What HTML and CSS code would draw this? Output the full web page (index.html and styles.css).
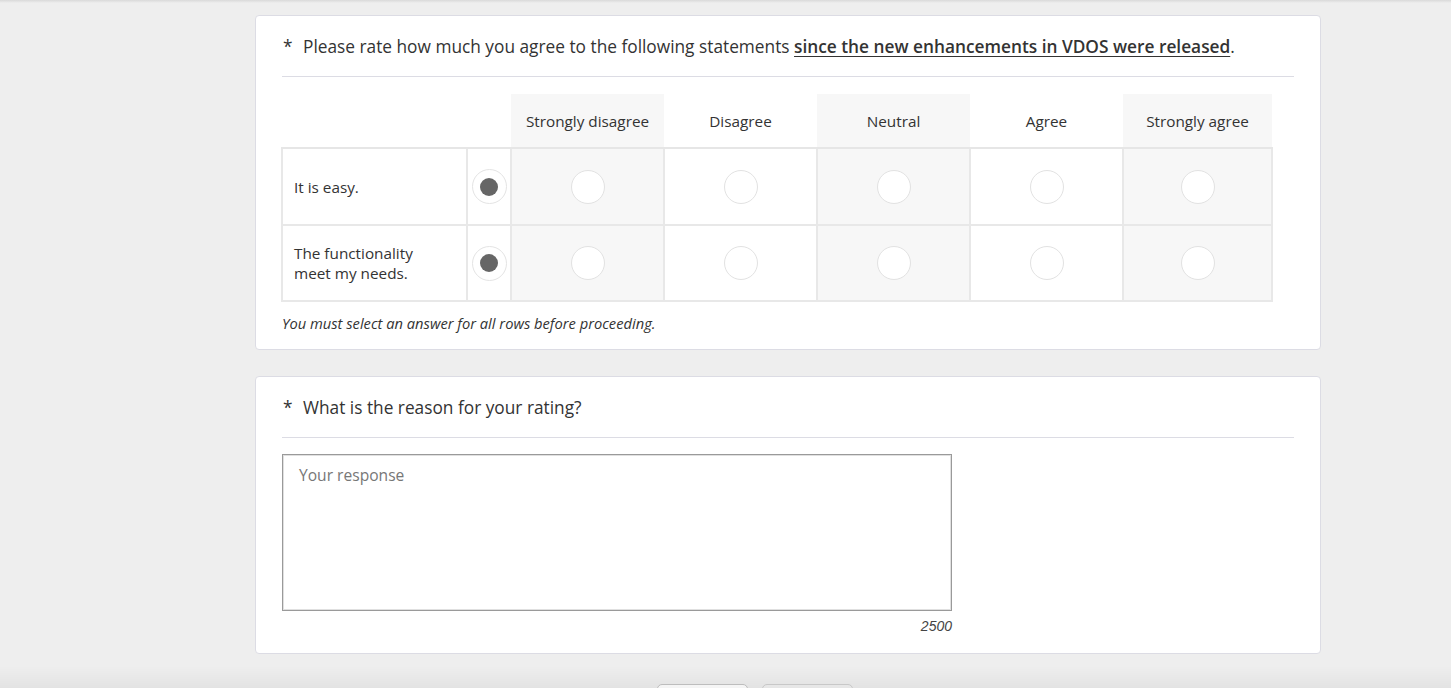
FILE: index.html
```html
<!DOCTYPE html>
<html lang="en">
<head>
<meta charset="utf-8">
<title>Survey</title>
<link rel="stylesheet" href="styles.css">
</head>
<body>
<div class="page">
  <section class="card">
    <h2 class="q-title"><span class="req">*</span><span>Please rate how much you agree to the following statements <u class="em">since the new enhancements in VDOS were released</u>.</span></h2>
    <div class="divider"></div>
    <table class="matrix">
      <colgroup>
        <col class="c-label"><col class="c-sel"><col class="c-opt"><col class="c-opt"><col class="c-opt"><col class="c-opt"><col class="c-opt5">
      </colgroup>
      <thead>
        <tr>
          <th class="blank"></th>
          <th class="blank"></th>
          <th class="shade">Strongly disagree</th>
          <th>Disagree</th>
          <th class="shade">Neutral</th>
          <th>Agree</th>
          <th class="shade">Strongly agree</th>
        </tr>
      </thead>
      <tbody>
        <tr class="r1">
          <td class="label">It is easy.</td>
          <td class="sel"><span class="radio checked"></span></td>
          <td class="shade"><span class="radio"></span></td>
          <td><span class="radio"></span></td>
          <td class="shade"><span class="radio"></span></td>
          <td><span class="radio"></span></td>
          <td class="shade"><span class="radio"></span></td>
        </tr>
        <tr class="r2">
          <td class="label">The functionality<br>meet my needs.</td>
          <td class="sel"><span class="radio checked"></span></td>
          <td class="shade"><span class="radio"></span></td>
          <td><span class="radio"></span></td>
          <td class="shade"><span class="radio"></span></td>
          <td><span class="radio"></span></td>
          <td class="shade"><span class="radio"></span></td>
        </tr>
      </tbody>
    </table>
    <p class="note">You must select an answer for all rows before proceeding.</p>
  </section>

  <section class="card card2">
    <h2 class="q-title"><span class="req">*</span><span>What is the reason for your rating?</span></h2>
    <div class="divider"></div>
    <div class="resp">
      <div class="textarea">Your response</div>
      <div class="count">2500</div>
    </div>
  </section>

  <div class="buttons">
    <span class="btn btn-light"></span>
    <span class="btn btn-gray"></span>
  </div>
</div>
</body>
</html>
```

FILE: styles.css
```css
html, body {
  margin: 0;
  padding: 0;
}
body {
  background: #eeeeee;
  font-family: "Open Sans", "Noto Sans", sans-serif;
  color: #333333;
  height: 688px;
  overflow: hidden;
  position: relative;
}
body::before {
  content: "";
  position: fixed;
  left: 0;
  right: 0;
  top: 0;
  height: 3px;
  background: linear-gradient(#d9d9d9, #eeeeee);
}
body::after {
  content: "";
  position: fixed;
  left: 0;
  right: 0;
  bottom: 0;
  height: 22px;
  background: linear-gradient(rgba(0,0,0,0), rgba(0,0,0,0.045));
  pointer-events: none;
}
.page {
  width: 1066px;
  margin-left: 255px;
  padding-top: 15px;
  display: flex;
  flex-direction: column;
}
.card {
  background: #ffffff;
  border: 1px solid #dcdce4;
  border-radius: 4px;
  padding: 19px 26px 0 26px;
  box-sizing: border-box;
}
.card:first-child {
  height: 335px;
}
.card2 {
  margin-top: 26px;
  height: 278px;
}
.q-title {
  margin: 0;
  font-size: 17.3px;
  font-weight: 400;
  line-height: 24px;
  display: flex;
  gap: 10px;
  color: #333;
}
.req {
  display: inline-block;
  width: 10px;
  padding-left: 1px;
}
.em {
  font-weight: 600;
  text-decoration-thickness: 1px;
  text-underline-offset: 3px;
}
.divider {
  height: 1px;
  background: #dcdce4;
  margin-top: 17px;
}
.matrix {
  margin-top: 17px;
  margin-left: -1px;
  border-collapse: collapse;
  table-layout: fixed;
  width: 990px;
  font-size: 15.3px;
}
.c-label { width: 185px; }
.c-sel { width: 44px; }
.c-opt { width: 153px; }
.c-opt5 { width: 149px; }
.matrix th {
  height: 53px;
  padding: 0;
  font-weight: 400;
  text-align: center;
  color: #333;
  border: none;
  border-bottom: 2px solid #e6e6e6;
}
.matrix .shade {
  background: #f7f7f7;
}
.matrix td {
  border: 2px solid #e8e8e8;
  padding: 0;
  text-align: center;
  vertical-align: middle;
}
.matrix tr.r1 td { height: 75px; }
.matrix tr.r2 td { height: 74px; }
.matrix td.label {
  text-align: left;
  padding-left: 11px;
  line-height: 20px;
  color: #333;
}
.matrix td.sel {
  padding: 0;
}
.radio {
  display: inline-block;
  width: 34px;
  height: 34px;
  border: 1.5px solid #e2e2e2;
  border-radius: 50%;
  background: #ffffff;
  vertical-align: middle;
  box-sizing: border-box;
  position: relative;
}
.radio.checked {
  width: 35px;
  height: 35px;
  border: 1.5px solid #e4e4e4;
}
.radio.checked::after {
  content: "";
  position: absolute;
  left: 50%;
  top: 50%;
  width: 18px;
  height: 18px;
  margin: -9px 0 0 -9px;
  border-radius: 50%;
  background: #666666;
}
.note {
  margin: 11px 0 0 0;
  font-size: 14.7px;
  font-style: italic;
  color: #333;
  line-height: 20px;
}
.resp {
  width: 670px;
  margin-top: 16px;
  display: flex;
  flex-direction: column;
}
.textarea {
  height: 157px;
  border: 1px solid #9a9a9a;
  box-sizing: border-box;
  padding: 9px 16px;
  font-size: 15.6px;
  line-height: 22px;
  color: #777;
  box-shadow: inset 0 0 0 1px #e0e0e0;
}
.count {
  align-self: flex-end;
  margin-top: 7px;
  font-family: "Liberation Sans", Arial, sans-serif;
  font-style: italic;
  font-size: 14px;
  color: #444;
  padding-right: 0;
}
.buttons {
  display: flex;
  gap: 14px;
  margin-top: 30px;
  margin-left: 402px;
}
.btn {
  display: block;
  width: 91px;
  height: 30px;
  border: 1px solid #c4c4c4;
  border-radius: 5px;
  box-sizing: border-box;
}
.btn-light { background: #ffffff; }
.btn-gray { background: #f1f1f1; border-color: #d0d0d0; }
```
